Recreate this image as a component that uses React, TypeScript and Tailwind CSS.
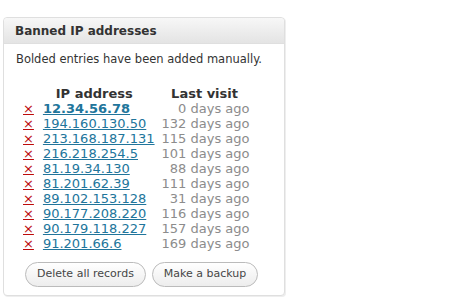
import React from "react";

const ips = [
  { ip: "12.34.56.78", days: 0, manual: true },
  { ip: "194.160.130.50", days: 132 },
  { ip: "213.168.187.131", days: 115 },
  { ip: "216.218.254.5", days: 101 },
  { ip: "81.19.34.130", days: 88 },
  { ip: "81.201.62.39", days: 111 },
  { ip: "89.102.153.128", days: 31 },
  { ip: "90.177.208.220", days: 116 },
  { ip: "90.179.118.227", days: 157 },
  { ip: "91.201.66.6", days: 169 },
];

export default function App() {
  return (
    <div className="w-[460px] h-[304px] bg-white pt-[17px] pl-[3px]" style={{ fontFamily: '"DejaVu Sans", Verdana, sans-serif' }}>
      <div className="w-[282px] border border-[#dfdfdf] rounded-[4px] bg-white shadow-[1px_1px_0_#eeeeee]">
        <div className="h-[26px] flex items-center pl-[11px] bg-gradient-to-b from-[#f7f7f7] to-[#e4e4e4] border-b border-[#dfdfdf] rounded-t-[4px]">
          <h3 className="text-[12px] font-bold text-[#333]">Banned IP addresses</h3>
        </div>

        <div className="pt-[8px] pb-[8px]">
          <p className="pl-[12px] text-[11.5px] leading-[14px] text-[#333]">
            Bolded entries have been added manually.
          </p>

          <table className="ml-[16px] mt-[20px] border-collapse text-[13px] leading-[15px]">
            <thead>
              <tr>
                <th></th>
                <th className="font-bold text-[#333] text-center pr-[16px]">IP address</th>
                <th className="font-bold text-[#333] text-center pl-[3px] pr-[8px]">Last visit</th>
              </tr>
            </thead>
            <tbody>
              {ips.map((r) => (
                <tr key={r.ip}>
                  <td className="pl-[3px] pr-[9px]">
                    <a href="#" className="text-[#bc0b0b] underline">×</a>
                  </td>
                  <td className="pr-[7px]">
                    <a href="#" className={"text-[#21759b] underline " + (r.manual ? "font-bold" : "")}>
                      {r.ip}
                    </a>
                  </td>
                  <td className="text-right text-[#8c8c8c] pr-[3px]">{r.days} days ago</td>
                </tr>
              ))}
            </tbody>
          </table>

          <div className="flex gap-[6px] ml-[21px] mt-[11px]">
            <button className="h-[25px] px-[11px] rounded-full border border-[#bbbbbb] bg-gradient-to-b from-white to-[#ededed] text-[11px] text-[#464646]">
              Delete all records
            </button>
            <button className="h-[25px] px-[11px] rounded-full border border-[#bbbbbb] bg-gradient-to-b from-white to-[#ededed] text-[11px] text-[#464646]">
              Make a backup
            </button>
          </div>
        </div>
      </div>
    </div>
  );
}
